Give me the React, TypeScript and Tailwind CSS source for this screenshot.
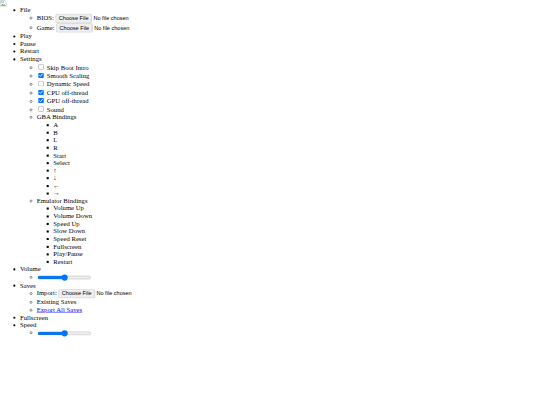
import React from 'react';

const gbaKeys = ['A', 'B', 'L', 'R', 'Start', 'Select', '↑', '↓', '←', '→'];
const emuKeys = [
  'Volume Up',
  'Volume Down',
  'Speed Up',
  'Slow Down',
  'Speed Reset',
  'Fullscreen',
  'Play/Pause',
  'Restart',
];
const toggles = [
  { name: 'Skip Boot Intro', on: false },
  { name: 'Smooth Scaling', on: true },
  { name: 'Dynamic Speed', on: false },
  { name: 'CPU off-thread', on: true },
  { name: 'GPU off-thread', on: true },
  { name: 'Sound', on: false },
];

const discList = 'list-disc pl-[40px]';
const circleList = 'list-[circle] pl-[40px]';
const squareList = 'list-[square] pl-[40px]';

const FileInput = () => (
  <input
    type="file"
    className="font-['Liberation_Sans',sans-serif] text-[13.33px] tracking-normal file:mr-[4px] file:rounded-[4px] file:border file:border-solid file:border-[#a5a5a5] file:bg-[#efefef] file:px-[7px] file:py-[1px] file:text-black"
  />
);

const Slider = () => (
  <input
    type="range"
    defaultValue={50}
    className="m-[2px] h-[16px] w-[129px] align-middle"
  />
);

export default function App() {
  return (
    <div className="h-[405px] w-[540px] overflow-hidden bg-white">
      <div className="relative h-[972px] w-[1296px] origin-top-left scale-[0.4167] font-['Liberation_Serif',serif] text-[16px] leading-[18.25px] tracking-[0.05px] text-black">
        {/* broken image placeholder */}
        <svg className="absolute left-0 top-0" width="16" height="16" viewBox="0 0 16 16">
          <path d="M1 1h10l4 4v10H1z" fill="#fff" stroke="#a0a0a0" />
          <path d="M2 14l4-5 3 3 2-2 3 4z" fill="#6fa35a" />
          <path d="M2 2h8v5H2z" fill="#b9d0f2" />
        </svg>
        <div className="pt-[15px] pl-[8px]">
          <ul className={discList}>
            <li>
              File
              <ul className={circleList}>
                <li>
                  BIOS: <FileInput />
                </li>
                <li>
                  Game: <FileInput />
                </li>
              </ul>
            </li>
            <li>Play</li>
            <li>Pause</li>
            <li>Restart</li>
            <li>
              Settings
              <ul className={circleList}>
                {toggles.map((t) => (
                  <li key={t.name}>
                    <input type="checkbox" defaultChecked={t.on} className="m-[3px_3px_3px_4px]" /> {t.name}
                  </li>
                ))}
                <li>
                  GBA Bindings
                  <ul className={squareList}>
                    {gbaKeys.map((k) => (
                      <li key={k}>{k}</li>
                    ))}
                  </ul>
                </li>
                <li>
                  Emulator Bindings
                  <ul className={squareList}>
                    {emuKeys.map((k) => (
                      <li key={k}>{k}</li>
                    ))}
                  </ul>
                </li>
              </ul>
            </li>
            <li>
              Volume
              <ul className={circleList}>
                <li>
                  <Slider />
                </li>
              </ul>
            </li>
            <li>
              Saves
              <ul className={circleList}>
                <li>
                  Import: <FileInput />
                </li>
                <li>Existing Saves</li>
                <li>
                  <a href="#" className="text-[#0000ee] underline">
                    Export All Saves
                  </a>
                </li>
              </ul>
            </li>
            <li>Fullscreen</li>
            <li>
              Speed
              <ul className={circleList}>
                <li>
                  <Slider />
                </li>
              </ul>
            </li>
          </ul>
        </div>
      </div>
    </div>
  );
}
